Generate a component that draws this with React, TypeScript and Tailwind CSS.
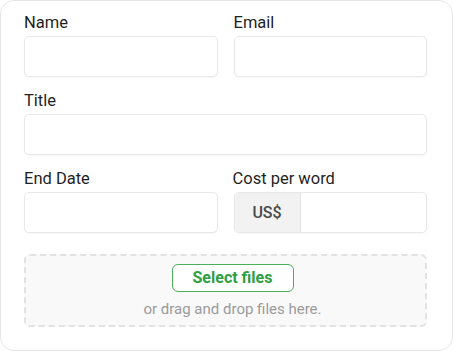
export default function App() {
    const inputCls = "block h-[41px] w-full rounded-[5px] border border-[#e8e8e8] bg-white px-3 text-[15px] text-[#222] shadow-[0_1px_2px_rgba(0,0,0,0.04)] outline-none"
    const labelCls = "block h-6 text-[16.5px] leading-6 text-[#1f1f1f]"

    return (
        <div className="h-[351px] w-[453px] bg-white" style={{ fontFamily: "Roboto, 'Liberation Sans', sans-serif" }}>
            <div className="h-[351px] w-[453px] rounded-[14px] border border-[#e6e6e6] bg-white pl-[23px] pr-[25px] pt-[10px]">
                {/* Name / Email */}
                <div className="grid grid-cols-2 gap-x-4">
                    <div>
                        <label className={labelCls}>Name</label>
                        <input className={`${inputCls} mt-px`} />
                    </div>
                    <div>
                        <label className={labelCls}>Email</label>
                        <input className={`${inputCls} mt-px`} />
                    </div>
                </div>

                {/* Title */}
                <div className="mt-3">
                    <label className={labelCls}>Title</label>
                    <input className={`${inputCls} mt-px`} />
                </div>

                {/* End Date / Cost per word */}
                <div className="mt-3 grid grid-cols-2 gap-x-4">
                    <div>
                        <label className={labelCls}>End Date</label>
                        <input className={`${inputCls} mt-px`} />
                    </div>
                    <div>
                        <label className={`${labelCls} -ml-px`}>Cost per word</label>
                        <div className="mt-px flex h-[41px] w-full overflow-hidden rounded-[5px] border border-[#e8e8e8] bg-white shadow-[0_1px_2px_rgba(0,0,0,0.04)]">
                            <div className="flex w-[66px] items-center justify-center border-r border-[#e3e3e3] bg-[#f2f2f2] text-[16px] font-medium text-[#4a4a4a]">
                                US$
                            </div>
                            <input className="h-full min-w-0 flex-1 px-3 outline-none" />
                        </div>
                    </div>
                </div>

                {/* Dropzone */}
                <div className="mt-[21px] flex h-[73px] flex-col items-center rounded-[6px] border-2 border-dashed border-[#e2e2e2] bg-[#f9f9f9] pl-[14px] pt-2">
                    <button className="h-[28px] w-[122px] rounded-[6px] border border-[#4cae5c] bg-white text-[16px] font-bold leading-none text-[#2f9e44]">
                        Select files
                    </button>
                    <p className="mt-[5px] text-[15px] leading-6 text-[#9b9b9b]">or drag and drop files here.</p>
                </div>
            </div>
        </div>
    )
}
